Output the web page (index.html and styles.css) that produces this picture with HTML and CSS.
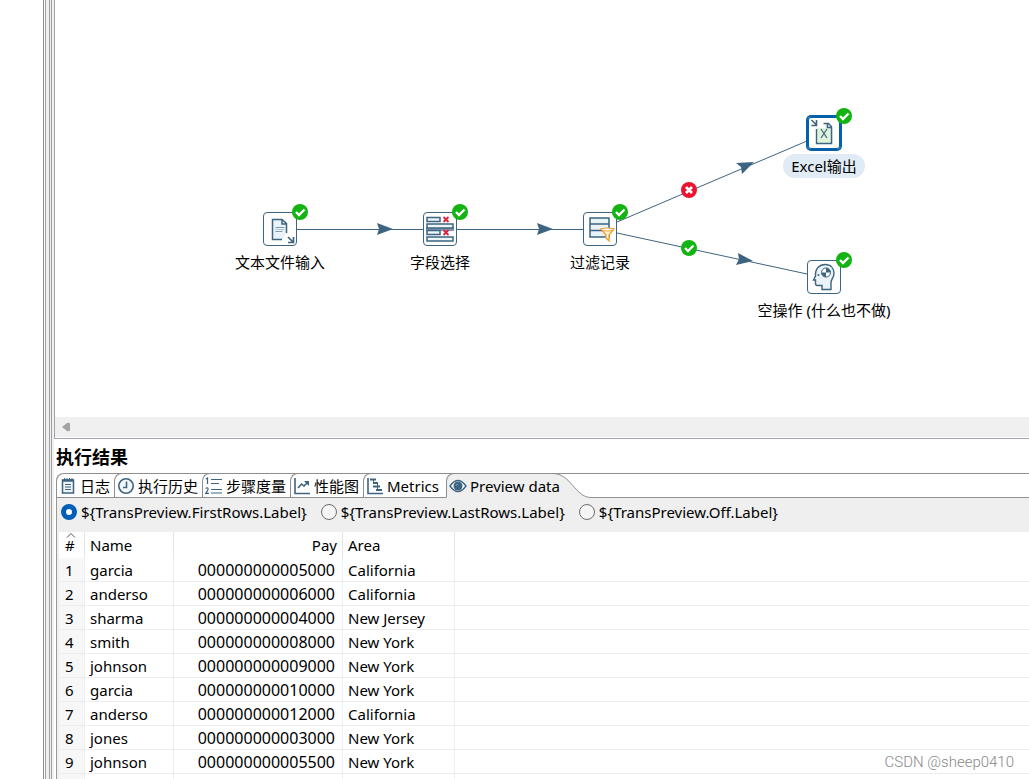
FILE: index.html
```html
<!DOCTYPE html>
<html lang="zh-CN">
<head>
<meta charset="utf-8">
<title>执行结果</title>
<meta name="viewport" content="width=device-width, initial-scale=1">
<link rel="stylesheet" href="styles.css">
</head>
<body>
<svg class="symbols" aria-hidden="true">
  <symbol id="ok" viewBox="0 0 16 16"><circle cx="8" cy="8" r="8" fill="#11b411"/><path d="M4 8l3 3 5.500-5.500" fill="none" stroke="#fff" stroke-width="2.400"/></symbol>
  <symbol id="fail" viewBox="0 0 16 16"><circle cx="8" cy="8" r="8" fill="#ec1330"/><path d="M5 5l6 6M11 5l-6 6" fill="none" stroke="#fff" stroke-width="2.800"/></symbol>
</svg>
<div class="app">
  <aside class="side"></aside>
  <div class="sash"></div>
  <main class="work">
    <section class="editor">
      <div class="canvas">
        <svg class="hops" width="960" height="417" viewBox="55 0 960 417">
          <g fill="none" stroke="#3d6480"><path d="M297 229.500H423M457 229.500H583"/><path d="M617 222L807 141M617 233L807 274"/></g>
          <g fill="#3d6480"><path d="M377 223l16 6-16 6 2-6z"/><path d="M537 223l16 6-16 6 2-6z"/><path d="M736 163l18-1-12 12-1-7z"/><path d="M738 253l15 8-17 4 3-6z"/></g>
          <use href="#fail" x="681" y="182" width="16" height="16"/>
          <use href="#ok" x="681" y="240" width="16" height="16"/>
        </svg>
        <div class="node n-input">
          <div class="tile">
            <svg width="32" height="32" viewBox="0 0 32 32"><path d="M8 6h9l6 5v8l-4 7H8z" fill="#e9f3f8"/><path d="M18 26.500H8.500v-20H18l4.500 4V20M18 7v4h4" fill="none" stroke="#3d6480" stroke-width="1.500"/><path d="M11.500 14.500h9M11.500 18.500h7" stroke="#7f9aae"/><path d="M11.500 16.500h9" stroke="#b5c6d2"/><path d="M24 24l5 5M29.500 24v5.500H24" fill="none" stroke="#3d6480" stroke-width="1.700"/></svg>
            <svg class="badge"><use href="#ok"/></svg>
          </div>
          <span class="label">文本文件输入</span>
        </div>
        <div class="node n-select">
          <div class="tile">
            <svg width="32" height="32" viewBox="0 0 32 32"><path d="M2 14h28v4H2z" fill="#8298ae"/><g fill="#edf5f8" stroke="#3d6480" stroke-width="1.500"><path d="M3 4.500h13v4H3zM3 11h26v4H3zM3 17.500h13v4H3zM3 24h26v4H3z"/></g><path d="M19.500 4l5 5m0-5l-5 5M19.500 17l5 5m0-5l-5 5" stroke="#e3203b" stroke-width="1.800"/></svg>
            <svg class="badge"><use href="#ok"/></svg>
          </div>
          <span class="label">字段选择</span>
        </div>
        <div class="node n-filter">
          <div class="tile">
            <svg width="32" height="32" viewBox="0 0 32 32"><path d="M6 5h19v19H6zM6 11h19M6 17.500h19" fill="#e8f3f8" stroke="#3d6480" stroke-width="1.500"/><path d="M17 16h13l-5 6v6l-3-3v-3z" fill="#fff3df" stroke="#f59c22" stroke-width="1.300"/><ellipse cx="23.500" cy="16.500" rx="6" ry="1.500" fill="#fff" stroke="#f59c22"/></svg>
            <svg class="badge"><use href="#ok"/></svg>
          </div>
          <span class="label">过滤记录</span>
        </div>
        <div class="node n-excel selected">
          <div class="tile">
            <svg width="32" height="32" viewBox="0 0 32 32"><path d="M9 11h8V7h3l5 5v14H9z" fill="#dff2dc"/><path d="M8.500 12v14.500h15v-17l-3-3h-5M19.500 7v3.500h4" fill="none" stroke="#3d6480" stroke-width="1.400"/><path d="M13 12l6 9m0-9l-6 9" stroke="#3d6480" stroke-width="1.200"/><path d="M3.500 3l5 5M8.500 3v5.500H3.500" fill="none" stroke="#3d6480" stroke-width="1.600"/></svg>
            <svg class="badge"><use href="#ok"/></svg>
          </div>
          <span class="label">Excel输出</span>
        </div>
        <div class="node n-dummy">
          <div class="tile">
            <svg width="32" height="32" viewBox="0 0 32 32"><path d="M14 28.500v-4H9.500q-2 0-2-2V19H5.500l2-4C7 7 12 3.500 17 3.500c6 0 9 4 9 9 0 4-3 6-3 9v7z" fill="#e9f3f8" stroke="#3d6480" stroke-width="1.400"/><circle cx="18" cy="11.500" r="4.500" fill="#fff" stroke="#3d6480"/><path d="M18 11.500V7a4.500 4.500 0 0 1 4.500 4.500zM18 11.500V16a4.500 4.500 0 0 1-4.500-4.500z" fill="#3d6480"/><circle cx="10.500" cy="14" r="1" fill="#3d6480"/></svg>
            <svg class="badge"><use href="#ok"/></svg>
          </div>
          <span class="label">空操作 (什么也不做)</span>
        </div>
      </div>
      <div class="scrollbar"><svg width="8" height="10" viewBox="0 0 8 10"><path d="M0 5l5-4q3-1 3 1v6q0 2-3 1z" fill="#a3a3a3"/></svg></div>
    </section>
    <section class="results">
      <h1>执行结果</h1>
      <div class="folder">
        <div class="tabs" role="tablist">
          <button class="tab t-log" role="tab"><svg width="16" height="18" viewBox="0 0 16 18"><path d="M2.500 3h11v13h-11z" fill="#edf5f8" stroke="#3d6480" stroke-width="1.500"/><path d="M3 3.500h10" stroke="#3d6480" stroke-width="2.500"/><path d="M4.500 1v3m2.500-3v3m2.500-3v3m2.500-3v3" stroke="#3d6480"/><path d="M5 7.500h6M5 10h6M5 12.500h6" stroke="#3d6480"/></svg>日志</button>
          <button class="tab t-history" role="tab"><svg width="18" height="18" viewBox="0 0 18 18"><circle cx="9" cy="9" r="7.200" fill="#f4f8fa" stroke="#3d6480" stroke-width="1.600"/><path d="M9.500 4.500v6H6" fill="none" stroke="#3d6480" stroke-width="1.600"/></svg>执行历史</button>
          <button class="tab t-steps" role="tab"><svg width="18" height="18" viewBox="0 0 18 18"><path d="M6 2.500h11M6 6.500h8M6 12.500h11M6 16h11" stroke="#3d6480" stroke-width="1.200"/><path d="M1 2l1.500-1v6M.5 11.500q2-1.500 2.500 0T.7 16.400h3.300" fill="none" stroke="#3d6480" stroke-width="1.200"/></svg>步骤度量</button>
          <button class="tab t-perf" role="tab"><svg width="18" height="18" viewBox="0 0 18 18"><path d="M2 1v15.500h15" fill="none" stroke="#3d6480" stroke-width="1.600"/><path d="M5 11l3.500-4 2.500 2 4-4" fill="none" stroke="#3d6480" stroke-width="1.600"/><path d="M11 4h5v5z" fill="#3d6480"/></svg>性能图</button>
          <button class="tab t-metrics" role="tab"><svg width="18" height="18" viewBox="0 0 18 18"><path d="M2 1v15.500h15" fill="none" stroke="#3d6480" stroke-width="1.600"/><path d="M4 2.500h6M7 6h5M7 9.500h7M10 13h6" stroke="#3d6480" stroke-width="2.200"/><path d="M7.500 2v4M11.500 6v4M11.500 9v4" stroke="#3d6480"/></svg>Metrics</button>
          <button class="tab t-preview" role="tab" aria-selected="true"><svg width="18" height="18" viewBox="0 0 18 18"><path d="M1 9q8-11 16 0-8 11-16 0z" fill="#fff" stroke="#3d6480" stroke-width="1.400"/><circle cx="9" cy="9" r="4.500" fill="#3d6480"/><path d="M7 9q0-2 2-2" fill="none" stroke="#7f9aae"/></svg>Preview data</button>
          <svg class="curve" width="38" height="25" viewBox="0 0 38 25"><path d="M0 .5C18 .5 22 24.500 38 24.500V25H0z" fill="#efefef"/><path d="M0 .5H38M0 .5C18 .5 22 24.500 38 24.500" fill="none" stroke="#8f8f8f"/></svg>
          <div class="filler"></div>
        </div>
        <div class="options" role="radiogroup">
          <label><input type="radio" name="rows" checked>${TransPreview.FirstRows.Label}</label>
          <label><input type="radio" name="rows">${TransPreview.LastRows.Label}</label>
          <label><input type="radio" name="rows">${TransPreview.Off.Label}</label>
        </div>
        <table>
          <colgroup><col class="c-num"><col class="c-name"><col class="c-pay"><col class="c-area"><col></colgroup>
          <thead><tr><th class="num"><svg class="sort" width="10" height="5" viewBox="0 0 10 5"><path d="M1 4.500l4-4 4 4" fill="none" stroke="#555"/></svg>#</th><th>Name</th><th class="pay">Pay</th><th>Area</th><th class="rest"></th></tr></thead>
          <tbody>
            <tr><td class="num">1</td><td>garcia</td><td class="pay">000000000005000</td><td>California</td><td class="rest"></td></tr>
            <tr><td class="num">2</td><td>anderso</td><td class="pay">000000000006000</td><td>California</td><td class="rest"></td></tr>
            <tr><td class="num">3</td><td>sharma</td><td class="pay">000000000004000</td><td>New Jersey</td><td class="rest"></td></tr>
            <tr><td class="num">4</td><td>smith</td><td class="pay">000000000008000</td><td>New York</td><td class="rest"></td></tr>
            <tr><td class="num">5</td><td>johnson</td><td class="pay">000000000009000</td><td>New York</td><td class="rest"></td></tr>
            <tr><td class="num">6</td><td>garcia</td><td class="pay">000000000010000</td><td>New York</td><td class="rest"></td></tr>
            <tr><td class="num">7</td><td>anderso</td><td class="pay">000000000012000</td><td>California</td><td class="rest"></td></tr>
            <tr><td class="num">8</td><td>jones</td><td class="pay">000000000003000</td><td>New York</td><td class="rest"></td></tr>
            <tr><td class="num">9</td><td>johnson</td><td class="pay">000000000005500</td><td>New York</td><td class="rest"></td></tr>
            <tr><td class="num"></td><td></td><td class="pay"></td><td></td><td class="rest"></td></tr>
          </tbody>
        </table>
      </div>
    </section>
  </main>
</div>
<div class="watermark">CSDN @sheep0410</div>
</body>
</html>
```

FILE: styles.css
```css
* { box-sizing: border-box; }
body {
  margin: 0;
  background: #fff;
  color: #000;
  font: 15px/20px "Noto Sans", "Noto Sans CJK SC", sans-serif;
}
svg { display: block; flex: none; }
.symbols { position: absolute; width: 0; height: 0; }
.app { display: flex; height: 100vh; overflow: hidden; }
.side { width: 44px; flex: none; border-right: 1px solid #8c8c8c; }
.sash {
  width: 7px;
  flex: none;
  margin-left: 1px;
  border: solid #a0a0a0;
  border-width: 0 1px;
  background: linear-gradient(#a0a0a0, #a0a0a0) 3px 0 / 1px 100% no-repeat #f0f0f0;
}
.work {
  flex: 1;
  min-width: 0;
  display: flex;
  flex-direction: column;
  background: linear-gradient(#f0f0f0, #f0f0f0) 0 0 / 2px 100% no-repeat #fff;
}
.editor {
  margin-left: 2px;
  border: solid #a0a4ac;
  border-width: 0 0 1px 1px;
}
.canvas { position: relative; height: 417px; overflow: hidden; }
.hops { position: absolute; left: 0; top: 0; }
.node {
  position: absolute;
  width: 160px;
  display: flex;
  flex-direction: column;
  align-items: center;
  gap: 4px;
}
.n-input { left: 145px; top: 212px; }
.n-select { left: 305px; top: 212px; }
.n-filter { left: 465px; top: 212px; }
.n-excel { left: 689px; top: 116px; }
.n-dummy { left: 689px; top: 260px; }
.tile {
  position: relative;
  width: 34px;
  height: 34px;
  border: 1px solid #3d6480;
  border-radius: 4px;
  background: #fff;
}
.selected .tile { border-color: #0460a9; box-shadow: 0 0 0 1px #0460a9, inset 0 0 0 1px #0460a9; }
.badge { position: absolute; top: -9px; right: -12px; width: 16px; height: 16px; }
.label { padding: 0 8px; line-height: 24px; border-radius: 12px; white-space: nowrap; }
.selected .label { background: #e1ebf5; }
.scrollbar {
  height: 20px;
  margin-bottom: 1px;
  padding-left: 7px;
  display: flex;
  align-items: center;
  background: #f0f0f0;
}
.results { flex: 1; padding-left: 4px; min-height: 0; display: flex; flex-direction: column; }
h1 {
  margin: 0;
  height: 34px;
  font: bold 18px/34px "Noto Sans CJK SC", sans-serif;
}
.folder {
  flex: 1;
  min-height: 0;
  background: #efefef;
  border-left: 1px solid #999;
  border-top-left-radius: 8px;
}
.tabs {
  display: flex;
  height: 25px;
  margin-left: -1px;
  background: linear-gradient(#8f8f8f, #8f8f8f) 8px 0 / 100% 1px no-repeat #fff;
  border-top-left-radius: 8px;
}
.tab {
  display: flex;
  align-items: center;
  gap: 3px;
  flex: none;
  padding: 0 0 0 2px;
  border: solid #8f8f8f;
  border-width: 1px 0 1px 1px;
  border-top-left-radius: 8px;
  background: #fff;
  color: inherit;
  font: inherit;
  white-space: nowrap;
}
.t-log { width: 58px; padding-left: 3px; gap: 4px; }
.t-history, .t-steps { width: 88px; }
.t-perf { width: 73px; }
.t-metrics { width: 83px; }
.t-preview { position: relative; width: 107px; background: #efefef; border-bottom-color: #efefef; }
.filler { flex: 1; border: solid #8f8f8f; border-width: 1px 0; }
.options { display: flex; gap: 14px; height: 34px; padding-left: 4px; }
.options label { display: flex; align-items: center; gap: 4px; height: 28px; white-space: nowrap; }
input {
  appearance: none;
  width: 16px;
  height: 16px;
  margin: 0;
  border: 1px solid #6d6d6d;
  border-radius: 50%;
  background: #f5f5f5;
}
input:checked { border: 5px solid #005fb8; background: #fff; }
table {
  width: calc(100% - 2px);
  margin-left: 2px;
  table-layout: fixed;
  border-collapse: separate;
  border-spacing: 0;
  background: #fff;
}
.c-num { width: 26px; }
.c-name { width: 89px; }
.c-pay { width: 169px; }
.c-area { width: 112px; }
th, td { padding: 0 5px; text-align: left; white-space: nowrap; }
th { position: relative; height: 26px; border-right: 1px solid #e5e5e5; font-weight: normal; }
td { height: 24px; border-right: 1px solid #e8eff7; border-bottom: 1px solid #ededed; }
th.rest, td.rest { border-right: 0; }
th.num, td.num { padding: 0 6px; }
td.num { background: #f7f7f7; }
th.pay { text-align: right; }
td.pay { text-align: right; padding-right: 7px; font-size: 16px; }
.sort { position: absolute; left: 7px; top: 1px; }
.watermark {
  position: absolute;
  right: 15px;
  bottom: 7px;
  color: #888;
  font: 300 15px/20px Roboto, sans-serif;
}
```
